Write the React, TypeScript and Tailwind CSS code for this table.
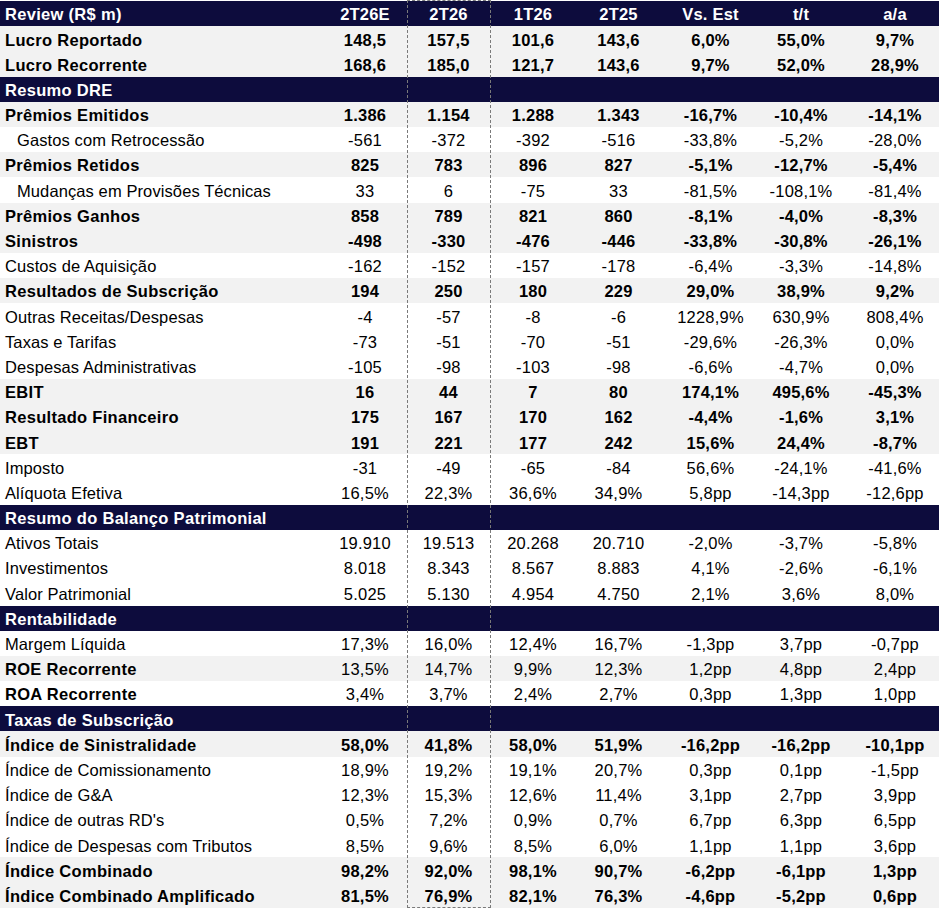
import React from "react";

type Kind = "head" | "section" | "bold" | "normal" | "indent";

type Row = {
	label: string;
	kind: Kind;
	values?: string[];
	gray?: boolean;
	boldLabelOnly?: boolean;
};

const rows: Row[] = [
	{ label: "Review (R$ m)", kind: "head", values: ["2T26E", "2T26", "1T26", "2T25", "Vs. Est", "t/t", "a/a"] },
	{ label: "Lucro Reportado", kind: "bold", gray: true, values: ["148,5", "157,5", "101,6", "143,6", "6,0%", "55,0%", "9,7%"] },
	{ label: "Lucro Recorrente", kind: "bold", gray: true, values: ["168,6", "185,0", "121,7", "143,6", "9,7%", "52,0%", "28,9%"] },
	{ label: "Resumo DRE", kind: "section" },
	{ label: "Prêmios Emitidos", kind: "bold", gray: true, values: ["1.386", "1.154", "1.288", "1.343", "-16,7%", "-10,4%", "-14,1%"] },
	{ label: "Gastos com Retrocessão", kind: "indent", values: ["-561", "-372", "-392", "-516", "-33,8%", "-5,2%", "-28,0%"] },
	{ label: "Prêmios Retidos", kind: "bold", gray: true, values: ["825", "783", "896", "827", "-5,1%", "-12,7%", "-5,4%"] },
	{ label: "Mudanças em Provisões Técnicas", kind: "indent", values: ["33", "6", "-75", "33", "-81,5%", "-108,1%", "-81,4%"] },
	{ label: "Prêmios Ganhos", kind: "bold", gray: true, values: ["858", "789", "821", "860", "-8,1%", "-4,0%", "-8,3%"] },
	{ label: "Sinistros", kind: "bold", gray: true, values: ["-498", "-330", "-476", "-446", "-33,8%", "-30,8%", "-26,1%"] },
	{ label: "Custos de Aquisição", kind: "normal", values: ["-162", "-152", "-157", "-178", "-6,4%", "-3,3%", "-14,8%"] },
	{ label: "Resultados de Subscrição", kind: "bold", gray: true, values: ["194", "250", "180", "229", "29,0%", "38,9%", "9,2%"] },
	{ label: "Outras Receitas/Despesas", kind: "normal", values: ["-4", "-57", "-8", "-6", "1228,9%", "630,9%", "808,4%"] },
	{ label: "Taxas e Tarifas", kind: "normal", values: ["-73", "-51", "-70", "-51", "-29,6%", "-26,3%", "0,0%"] },
	{ label: "Despesas Administrativas", kind: "normal", values: ["-105", "-98", "-103", "-98", "-6,6%", "-4,7%", "0,0%"] },
	{ label: "EBIT", kind: "bold", gray: true, values: ["16", "44", "7", "80", "174,1%", "495,6%", "-45,3%"] },
	{ label: "Resultado Financeiro", kind: "bold", gray: true, values: ["175", "167", "170", "162", "-4,4%", "-1,6%", "3,1%"] },
	{ label: "EBT", kind: "bold", gray: true, values: ["191", "221", "177", "242", "15,6%", "24,4%", "-8,7%"] },
	{ label: "Imposto", kind: "normal", values: ["-31", "-49", "-65", "-84", "56,6%", "-24,1%", "-41,6%"] },
	{ label: "Alíquota Efetiva", kind: "normal", values: ["16,5%", "22,3%", "36,6%", "34,9%", "5,8pp", "-14,3pp", "-12,6pp"] },
	{ label: "Resumo do Balanço Patrimonial", kind: "section" },
	{ label: "Ativos Totais", kind: "normal", values: ["19.910", "19.513", "20.268", "20.710", "-2,0%", "-3,7%", "-5,8%"] },
	{ label: "Investimentos", kind: "normal", values: ["8.018", "8.343", "8.567", "8.883", "4,1%", "-2,6%", "-6,1%"] },
	{ label: "Valor Patrimonial", kind: "normal", values: ["5.025", "5.130", "4.954", "4.750", "2,1%", "3,6%", "8,0%"] },
	{ label: "Rentabilidade", kind: "section" },
	{ label: "Margem Líquida", kind: "normal", values: ["17,3%", "16,0%", "12,4%", "16,7%", "-1,3pp", "3,7pp", "-0,7pp"] },
	{ label: "ROE Recorrente", kind: "normal", boldLabelOnly: true, gray: true, values: ["13,5%", "14,7%", "9,9%", "12,3%", "1,2pp", "4,8pp", "2,4pp"] },
	{ label: "ROA Recorrente", kind: "normal", boldLabelOnly: true, values: ["3,4%", "3,7%", "2,4%", "2,7%", "0,3pp", "1,3pp", "1,0pp"] },
	{ label: "Taxas de Subscrição", kind: "section" },
	{ label: "Índice de Sinistralidade", kind: "bold", gray: true, values: ["58,0%", "41,8%", "58,0%", "51,9%", "-16,2pp", "-16,2pp", "-10,1pp"] },
	{ label: "Índice de Comissionamento", kind: "normal", values: ["18,9%", "19,2%", "19,1%", "20,7%", "0,3pp", "0,1pp", "-1,5pp"] },
	{ label: "Índice de G&A", kind: "normal", values: ["12,3%", "15,3%", "12,6%", "11,4%", "3,1pp", "2,7pp", "3,9pp"] },
	{ label: "Índice de outras RD's", kind: "normal", values: ["0,5%", "7,2%", "0,9%", "0,7%", "6,7pp", "6,3pp", "6,5pp"] },
	{ label: "Índice de Despesas com Tributos", kind: "normal", values: ["8,5%", "9,6%", "8,5%", "6,0%", "1,1pp", "1,1pp", "3,6pp"] },
	{ label: "Índice Combinado", kind: "bold", gray: true, values: ["98,2%", "92,0%", "98,1%", "90,7%", "-6,2pp", "-6,1pp", "1,3pp"] },
	{ label: "Índice Combinado Amplificado", kind: "bold", gray: true, values: ["81,5%", "76,9%", "82,1%", "76,3%", "-4,6pp", "-5,2pp", "0,6pp"] },
];

function TableRow({ row }: { row: Row }) {
	const dark = row.kind === "head" || row.kind === "section";
	const bg = dark ? "bg-[#0d0c3d] text-white" : row.gray ? "bg-[#f2f2f2] text-black" : "bg-white text-black";
	const boldAll = dark || row.kind === "bold";
	const labelBold = boldAll || row.boldLabelOnly;
	const cells = row.values ?? ["", "", "", "", "", "", ""];

	return (
		<div
			className={`grid h-[25.2px] grid-cols-[323px_84px_83px_86px_85px_99px_82px_106px] items-center pt-[2px] ${bg}`}
		>
			<div
				className={`whitespace-nowrap ${row.kind === "indent" ? "pl-[17px]" : "pl-[5px]"} ${
					labelBold ? "font-bold tracking-[0.3px]" : "font-normal tracking-[0.1px]"
				}`}
			>
				{row.label}
			</div>
			{cells.map((v, i) => (
				<div
					key={i}
					className={`text-center whitespace-nowrap ${boldAll ? "font-bold tracking-[0.2px]" : "font-normal tracking-[0.2px]"}`}
				>
					{v}
				</div>
			))}
		</div>
	);
}

export default function App() {
	return (
		<div className="relative h-[909px] w-[939px] overflow-hidden bg-white pt-px font-['Liberation_Sans',Arial,sans-serif] text-[16.5px] leading-none">
			{rows.map((row) => (
				<TableRow key={row.label} row={row} />
			))}
			{/* copy selection border around the 2T26 column */}
			<div className="pointer-events-none absolute top-0 left-[407px] h-[908px] w-[84px] border border-dashed border-[#7a7a7a]" />
		</div>
	);
}
